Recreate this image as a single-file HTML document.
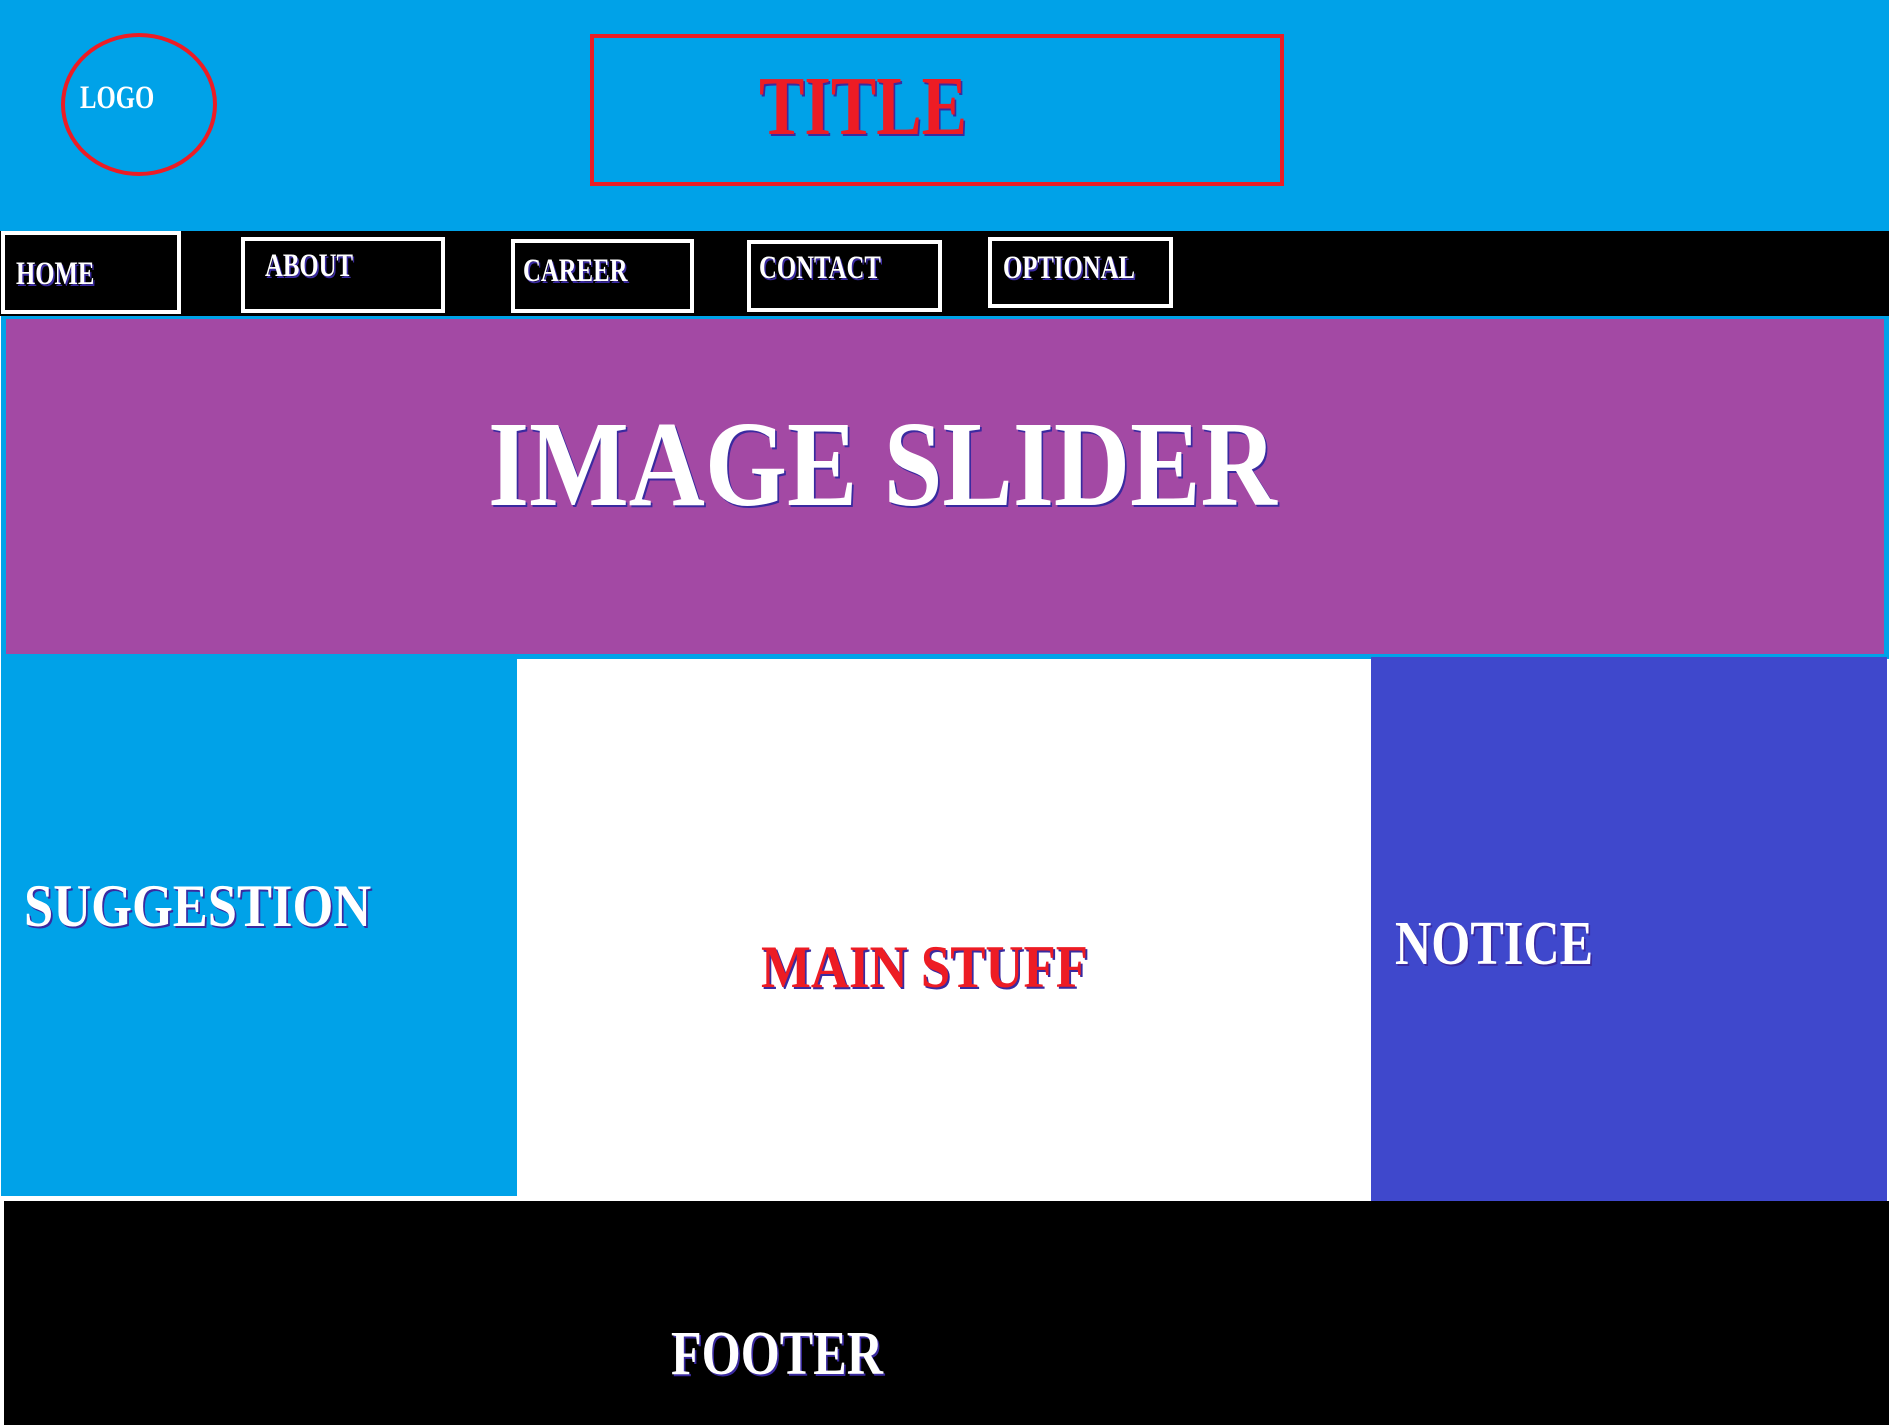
<!DOCTYPE html>
<html><head><meta charset="utf-8"><style>
html,body{margin:0;padding:0;}
body{width:1889px;height:1425px;position:relative;overflow:hidden;background:#fff;font-family:"Liberation Serif",serif;}
div{position:absolute;box-sizing:border-box;}
.t{position:absolute;font-weight:bold;line-height:1;white-space:nowrap;transform-origin:left center;transform:scaleX(0.75);}
.w{color:#fff;text-shadow:2px 2px 0 #3a2aa0;}
.nav{border:4px solid #fff;background:#000;}
</style></head><body>
<div style="left:0;top:0;width:1889px;height:231px;background:#00a2e8"></div>
<div style="left:61px;top:33px;width:156px;height:143px;border:4px solid #ed1c24;border-radius:50%"></div>
<div style="left:590px;top:34px;width:694px;height:152px;border:4px solid #ed1c24"></div>
<span class="t w" style="font-size:33px;left:80px;top:82px;text-shadow:none">LOGO</span>
<span class="t" style="font-size:84px;left:759px;top:65px;color:#ed1c24;text-shadow:2px 2px 0 #3a2aa0;transform:scaleX(0.81)">TITLE</span>

<div style="left:0;top:231px;width:1889px;height:85px;background:#000"></div>
<div class="nav" style="left:1px;top:231px;width:180px;height:83px"></div>
<div class="nav" style="left:241px;top:237px;width:204px;height:76px"></div>
<div class="nav" style="left:511px;top:239px;width:183px;height:74px"></div>
<div class="nav" style="left:747px;top:240px;width:195px;height:72px"></div>
<div class="nav" style="left:988px;top:237px;width:185px;height:71px"></div>
<span class="t w" style="font-size:33px;left:16px;top:258px">HOME</span>
<span class="t w" style="font-size:33px;left:265px;top:250px">ABOUT</span>
<span class="t w" style="font-size:33px;left:523px;top:255px">CAREER</span>
<span class="t w" style="font-size:33px;left:759px;top:252px">CONTACT</span>
<span class="t w" style="font-size:33px;left:1003px;top:252px">OPTIONAL</span>

<div style="left:1px;top:316px;width:1888px;height:343px;background:#00a2e8"></div>
<div style="left:6px;top:319px;width:1878px;height:335px;background:#a349a4"></div>
<span class="t w" style="font-size:122px;left:488px;top:404px;transform:scaleX(0.865)">IMAGE SLIDER</span>

<div style="left:1px;top:659px;width:516px;height:537px;background:#00a2e8"></div>
<div style="left:1371px;top:657px;width:516px;height:544px;background:#3f48cc"></div>
<span class="t w" style="font-size:60px;left:24px;top:876px;transform:scaleX(0.875)">SUGGESTION</span>
<span class="t" style="font-size:60px;left:761px;top:937px;color:#ed1c24;text-shadow:2px 2px 0 #3a2aa0;transform:scaleX(0.88)">MAIN STUFF</span>
<span class="t w" style="font-size:62px;left:1395px;top:913px;transform:scaleX(0.81)">NOTICE</span>

<div style="left:4px;top:1201px;width:1885px;height:224px;background:#000"></div>
<span class="t w" style="font-size:62px;left:671px;top:1323px;transform:scaleX(0.81)">FOOTER</span>
</body></html>
